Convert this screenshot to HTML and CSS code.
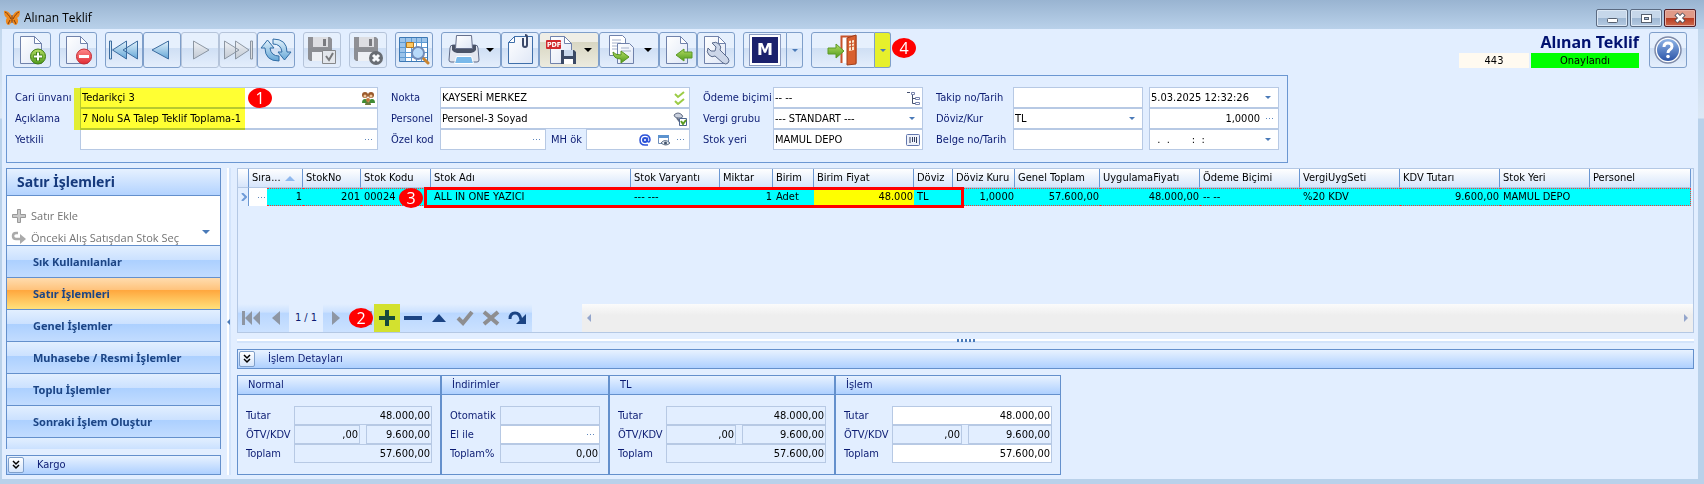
FILE: index.html
```
<!DOCTYPE html>
<html lang="tr">

	<head>
		<meta charset="utf-8" />
		<title>Alınan Teklif</title>
		<link rel="stylesheet" href="styles.css">
	</head>

	<body>
		<!-- gradients and shapes shared by the icons -->
		<svg class="defs" width="0" height="0" aria-hidden="true">
			<defs>
				<linearGradient id="gBlue" x1="0" y1="0" x2="0" y2="1"><stop offset="0" stop-color="#e4f3fc" /><stop offset="1" stop-color="#62a5d6" /></linearGradient>
				<linearGradient id="gPage" x1="0" y1="0" x2="1" y2="1"><stop offset="0" stop-color="#fff" /><stop offset="1" stop-color="#dfe7f6" /></linearGradient>
				<linearGradient id="gGreen" x1="0" y1="0" x2="0" y2="1"><stop offset="0" stop-color="#b4dc62" /><stop offset="1" stop-color="#4f9a1c" /></linearGradient>
				<linearGradient id="gRed" x1="0" y1="0" x2="0" y2="1"><stop offset="0" stop-color="#ff8a8a" /><stop offset="1" stop-color="#e02c34" /></linearGradient>
				<linearGradient id="gGray" x1="0" y1="0" x2="0" y2="1"><stop offset="0" stop-color="#f1f3f6" /><stop offset="1" stop-color="#bfc5cd" /></linearGradient>
				<linearGradient id="gHelp" x1="0" y1="0" x2="0" y2="1"><stop offset="0" stop-color="#8fb4e6" /><stop offset="1" stop-color="#2c55a8" /></linearGradient>
				<symbol id="page" viewBox="0 0 32 32"><path d="M4.500 2.500h14l7 7v20h-21z" fill="url(#gPage)" stroke="#7082ab" /><path d="M18.500 2.500v7h7z" fill="#fff" stroke="#7082ab" /></symbol>
				<symbol id="disk" viewBox="0 0 32 32"><path d="M2 3h22l2 2v22H4l-2-2z" fill="#808083" /><path d="M7 3h15v10H7z" fill="#dcdcde" /><path d="M17 5h3v7h-3z" fill="#66666a" /><path d="M6 18h17v9H6z" fill="#f2f2f4" /></symbol>
			</defs>
		</svg>

		<div class="window">
			<div class="title-bar">
				<svg class="logo" width="16" height="16" viewBox="0 0 16 16"><path d="M8 7C6 2 2 0 0 1c0 4 1 6 3 7-2 2-1 6 1 7 2 0 3-2 4-4 1 2 2 4 4 4 2-1 3-5 1-7 2-1 3-3 3-7-2-1-6 1-8 6z" fill="#f08a1d" /><path d="M7 9C5 5 3 3 1 2M9 9c2-4 4-6 6-7M6 10l-2 4M10 10l2 4M8 5v8" stroke="#7a3a10" fill="none" /></svg>
				<span class="title-text">Alınan Teklif</span>
				<div class="win-buttons">
					<button type="button" aria-label="Simge durumu"><svg width="14" height="12" viewBox="0 0 14 12"><rect x="2.500" y="6.500" width="10" height="4" rx="1" fill="#fff" stroke="#555f6e" /></svg></button>
					<button type="button" aria-label="Ekranı kapla"><svg width="14" height="12" viewBox="0 0 14 12"><rect x="2.500" y="2.500" width="10" height="8" fill="#fff" stroke="#555f6e" /><rect x="5.500" y="5.500" width="4" height="2" fill="#a9bdd6" stroke="#555f6e" /></svg></button>
					<button type="button" class="close" aria-label="Kapat"><svg width="14" height="12" viewBox="0 0 14 12"><path d="M3 2l8 8M11 2l-8 8" stroke="#4f4f59" stroke-width="4.500" /><path d="M3.500 2.500l7 7M10.500 2.500l-7 7" stroke="#fff" stroke-width="2.500" /></svg></button>
				</div>
			</div>

			<div class="client">
				<div class="toolbar">
					<div class="group">
						<button type="button" aria-label="Yeni"><svg viewBox="0 0 32 32"><use href="#page" /><circle cx="22" cy="22.500" r="7.500" fill="url(#gGreen)" stroke="#3f7d14" /><path d="M22 18v9M17.500 22.500h9" stroke="#3f7d14" stroke-width="4" /><path d="M22 18.500v8M18 22.500h8" stroke="#fff" stroke-width="2" /></svg></button>
					</div>
					<div class="group">
						<button type="button" aria-label="Sil"><svg viewBox="0 0 32 32"><use href="#page" /><circle cx="22" cy="22.500" r="7.500" fill="url(#gRed)" stroke="#c22a33" /><path d="M17 22.500h10" stroke="#fff" stroke-width="3" /></svg></button>
					</div>
					<div class="group">
						<button type="button" aria-label="İlk"><svg viewBox="0 0 32 32"><path d="M18.500 7v18L4.500 16zM29.500 7v18L15 16z" fill="url(#gBlue)" stroke="#3c6c9f" /><path d="M1.500 7h2v18h-2z" fill="#cfe5f5" stroke="#3c6c9f" /></svg></button>
						<button type="button" aria-label="Önceki"><svg viewBox="0 0 32 32"><path d="M22.500 7v18L6 16z" fill="url(#gBlue)" stroke="#3c6c9f" /></svg></button>
						<button type="button" disabled aria-label="Sonraki"><svg viewBox="0 0 32 32"><path d="M9.500 7v18L25 16z" fill="url(#gGray)" stroke="#7d8793" /></svg></button>
						<button type="button" disabled aria-label="Son"><svg viewBox="0 0 32 32"><path d="M2.500 7v18L17 16zM13.500 7v18L27 16z" fill="url(#gGray)" stroke="#7d8793" /><path d="M28.500 7h2v18h-2z" fill="#ddd" stroke="#7d8793" /></svg></button>
						<button type="button" aria-label="Yenile"><svg viewBox="0 0 32 32"><path d="M5 14q0 13 14 13v-5q-8 0-9-8h4L7.500 6 1 14zM27 18q0-13-14-13v5q8 0 9 8h-4l6.500 8 6.500-8z" fill="url(#gBlue)" stroke="#316da5" /></svg></button>
					</div>
					<div class="group">
						<button type="button" disabled aria-label="Kaydet"><svg viewBox="0 0 32 32"><use href="#disk" /><path d="M16.500 16.500h13v13h-13z" fill="#e5e7ea" stroke="#777" /><path d="M20 22l3 4 4-7" stroke="#666" stroke-width="2" fill="none" /></svg></button>
					</div>
					<div class="group">
						<button type="button" disabled aria-label="Vazgeç"><svg viewBox="0 0 32 32"><use href="#disk" /><circle cx="24" cy="24" r="7" fill="#55585c" /><path d="M21 21l6 6M27 21l-6 6" stroke="#fff" stroke-width="3" /></svg></button>
					</div>
					<div class="group">
						<button type="button" aria-label="Ara"><svg viewBox="0 0 32 32"><path d="M1.500 3.500h28v24h-28z" fill="#fff" stroke="#3c78b4" /><path d="M2 4h27v4H2zM2 4h5v23H2z" fill="#9cc4ea" /><path d="M2 8.500h27M2 13.500h27M2 18.500h27M2 23.500h27M7.500 4v23M13.500 4v23M18.500 4v23M23.500 4v23" stroke="#5e9ad2" /><path d="M8.500 8.500h7v5h-7z" fill="#ffc860" stroke="#b87a20" /><path d="M25 24l5 5" stroke="#c98430" stroke-width="3" stroke-linecap="round" /><circle cx="20" cy="19" r="6" fill="#b7dafa" stroke="#708bb8" stroke-width="2" /></svg></button>
					</div>
					<div class="group">
						<button type="button" class="drop" aria-label="Yazdır"><svg viewBox="0 0 32 32"><path d="M2 14q0-3 3-3h22q3 0 3 3l1 12q0 2-2 2H3q-2 0-2-2z" fill="#e3e7f0" stroke="#5f6b88" /><path d="M4 11h24v5q-2 3-5 3H9q-3 0-5-3z" fill="#4b5468" /><path d="M8.500 1.500h15l1 13h-17z" fill="url(#gPage)" stroke="#66708c" /><path d="M8.500 22.500h15l2 7h-19z" fill="#79b9ea" stroke="#fff" /></svg><i class="arrow"></i></button>
						<button type="button" aria-label="Ekler"><svg viewBox="0 0 32 32"><path d="M10.500 2.500h18v27h-24v-21z" fill="url(#gPage)" stroke="#3f6faa" /><path d="M4.500 8.500h6v-6z" fill="#fff" stroke="#3f6faa" /><path d="M19 4v7q0 2 2 2t2-2V3q0-2-2-2" fill="none" stroke="#3b4868" stroke-width="2" /></svg></button>
						<button type="button" class="drop warm" aria-label="PDF kaydet"><svg viewBox="0 0 32 32"><use href="#page" /><rect x="0" y="6" width="15" height="9" rx="1" fill="#d0282d" /><text x="1" y="13" class="pdf">PDF</text><path d="M15 16h13l2 2v12H15z" fill="#3b4a66" /><path d="M18 16h9v6h-9z" fill="#c9d9ee" /><path d="M18 25h9v5h-9z" fill="#fff" /></svg><i class="arrow"></i></button>
						<button type="button" class="drop" aria-label="Kopyala"><svg viewBox="0 0 32 32"><path d="M3.500 1.500h13l3 3v17h-16z" fill="#fff" stroke="#7082ab" /><path d="M6 6h9M6 9h9M6 12h9M6 15h5" stroke="#a5b1cb" /><path d="M11.500 9.500h12l4 4v16h-16z" fill="url(#gPage)" stroke="#7082ab" /><path d="M15 14h8M15 17h10" stroke="#a5b1cb" /><path d="M7 18q2 3 8 3v-4l8 6-8 6v-4q-8 0-8-7z" fill="url(#gGreen)" stroke="#56931f" /></svg><i class="arrow"></i></button>
						<button type="button" aria-label="Al"><svg viewBox="0 0 32 32"><use href="#page" /><path d="M14 21l8-6v3h8v6h-8v3z" fill="url(#gGreen)" stroke="#5c9a27" /></svg></button>
						<button type="button" aria-label="Araçlar"><svg viewBox="0 0 32 32"><use href="#page" /><path d="M8 14q-2 4 1 7t6 1l8 7q3 2 5 0t0-5l-8-8q2-3-1-6t-7-1l4 4-1 4-4 0z" fill="#ccd6e8" stroke="#5b6b8b" /></svg></button>
					</div>
					<div class="group">
						<button type="button" class="medium" aria-label="Modül"><span class="mlogo">M</span></button>
						<button type="button" class="thin" aria-label="Modül seçenekleri"><i class="arrow blue"></i></button>
					</div>
					<div class="group">
						<button type="button" class="wide" aria-label="Çıkış"><svg viewBox="0 0 32 32"><path d="M14.500 29V2.500h14V29" fill="#fff" stroke="#c8532a" stroke-width="2" /><path d="M20 4l9-3v29l-9 1z" fill="#d9602f" stroke="#9f3f1b" /><path d="M22 7l5-1v10l-5 1z" fill="#fbe7cc" /><path d="M24.500 6v10M22 10l5-1M22 13l5-1" stroke="#c8532a" /><path d="M1 14h8v-4l8 7-8 7v-4H1z" fill="url(#gGreen)" stroke="#5c9a27" /></svg></button>
						<button type="button" class="thin lit" aria-label="Çıkış seçenekleri"><i class="arrow blue"></i></button>
						<span class="badge badge-4">4</span>
					</div>
					<div class="status">
						<h1>Alınan Teklif</h1>
						<div class="state">
							<span class="doc-no">443</span>
							<span class="approved">Onaylandı</span>
						</div>
					</div>
					<button type="button" class="help" aria-label="Yardım"><svg viewBox="0 0 32 32"><circle cx="16" cy="16" r="13" fill="#fff" stroke="#7e8aa8" stroke-width="1.500" /><circle cx="16" cy="16" r="11" fill="url(#gHelp)" /><path d="M12 13q0-4 4-4t4 3.500q0 2-2.500 3.500-1.500 1-1.500 3" fill="none" stroke="#fff" stroke-width="3" /><circle cx="16" cy="22.500" r="1.800" fill="#fff" /></svg></button>
				</div>

				<form class="header-form">
					<label for="cari">Cari ünvanı</label>
					<div class="field"><input id="cari" value="Tedarikçi 3"><svg width="14" height="14" viewBox="0 0 14 14"><circle cx="4" cy="4" r="3" fill="#9a5a2c" /><circle cx="10" cy="4" r="3" fill="#9a5a2c" /><circle cx="4" cy="5" r="1.500" fill="#f2c79a" /><circle cx="10" cy="5" r="1.500" fill="#f2c79a" /><path d="M1 12q0-4 3-4t3 4zM8 12q0-4 3-4t3 4z" fill="#3f8b34" /><circle cx="7" cy="9" r="2" fill="#c0763c" /><path d="M4 14q0-3 3-3t3 3z" fill="#6f7a3c" /></svg></div>
					<label for="nokta" class="next">Nokta</label>
					<div class="field"><input id="nokta" value="KAYSERİ MERKEZ"><svg width="14" height="14" viewBox="0 0 14 14"><path d="M2 3l3 3 6-5M2 10l3 3 6-5" stroke="#9ccc46" stroke-width="2" fill="none" /></svg></div>
					<label for="odeme" class="next">Ödeme biçimi</label>
					<div class="field"><input id="odeme" value="-- --"><svg width="14" height="14" viewBox="0 0 14 14"><path d="M1 1.500h3M6.500 4v8.500h3M6.500 7.500h3" stroke="#44506e" fill="none" /><path d="M5.500 1.500h3v2h-3zM9.500 6.500h4v2h-4zM9.500 11.500h4v2h-4z" fill="#fff" stroke="#7a86ae" /></svg></div>
					<label for="takip" class="next">Takip no/Tarih</label>
					<div class="field"><input id="takip"></div>
					<div class="field date"><input aria-label="Takip tarihi" value="5.03.2025 12:32:26"><i class="arrow blue"></i></div>

					<label for="aciklama">Açıklama</label>
					<div class="field"><input id="aciklama" value="7 Nolu SA Talep Teklif Toplama-1"></div>
					<label for="personel" class="next">Personel</label>
					<div class="field"><input id="personel" value="Personel-3 Soyad"><svg width="14" height="14" viewBox="0 0 14 14"><path d="M1 3q4-4 8 0 2 2-1 3H4Q1 5 1 3z" fill="#c9d0dd" stroke="#636e85" /><path d="M4 6l3 4" stroke="#636e85" stroke-width="2" /><path d="M6.500 6.500h7v7h-7z" fill="#fff" stroke="#4d658f" /><path d="M8 9l2 3 3-4" stroke="#5a9b22" stroke-width="2" fill="none" /></svg></div>
					<label for="vergi" class="next">Vergi grubu</label>
					<div class="field"><select id="vergi"><option>--- STANDART ---</option></select><i class="arrow blue"></i></div>
					<label for="doviz" class="next">Döviz/Kur</label>
					<div class="field"><select id="doviz"><option>TL</option></select><i class="arrow blue"></i></div>
					<div class="field date num"><input aria-label="Kur" value="1,0000"><i class="dots"></i></div>

					<label for="yetkili">Yetkili</label>
					<div class="field"><input id="yetkili"><i class="dots"></i></div>
					<label for="ozel" class="next">Özel kod</label>
					<div class="split">
						<div class="field"><input id="ozel"><i class="dots"></i></div>
						<label for="mhok">MH ök</label>
						<div class="field"><input id="mhok"><svg width="12" height="14" viewBox="0 0 12 14"><circle cx="6" cy="7" r="2" fill="none" stroke="#2b52d8" stroke-width="2" /><path d="M8.500 4.500v4q2 1.500 2.500-1.500 0-5-5-5t-5 5 5 5h3" fill="none" stroke="#2b52d8" stroke-width="1.500" /></svg><svg width="14" height="14" viewBox="0 0 14 14"><path d="M1.500 2.500h10v8h-10z" fill="#fff" stroke="#6e8fbd" /><path d="M1 2h11v3H1z" fill="#5c93cf" /><path d="M4 10q4-5 9 0-4 4-9 0z" fill="#e4eaf2" stroke="#5b6d85" /><circle cx="8.500" cy="10" r="1.500" fill="#44546b" /></svg><i class="dots"></i></div>
					</div>
					<label for="stokyeri" class="next">Stok yeri</label>
					<div class="field"><input id="stokyeri" value="MAMUL DEPO"><svg width="14" height="14" viewBox="0 0 14 14"><rect x=".5" y="1.500" width="13" height="11" rx="1" fill="#eef2fb" stroke="#6277ad" /><path d="M4 4v6M6.500 4v5M8.500 4v5M10.500 4v6" stroke="#333d5c" /></svg></div>
					<label for="belge" class="next">Belge no/Tarih</label>
					<div class="field"><input id="belge"></div>
					<div class="field date"><input aria-label="Belge tarihi" value="  .  .       :  :"><i class="arrow blue"></i></div>

					<span class="marker"></span>
					<span class="badge badge-1">1</span>
				</form>

				<div class="main">
					<div class="sidebar">
						<div class="nav-box">
							<h2>Satır İşlemleri</h2>
							<div class="actions">
								<button type="button"><svg width="16" height="16" viewBox="0 0 16 16"><path d="M6.500 1.500h3v5h5v3h-5v5h-3v-5h-5v-3h5z" fill="#c9c9c9" stroke="#999" /></svg>Satır Ekle</button>
								<button type="button"><svg width="16" height="16" viewBox="0 0 16 16"><path d="M7 3H5Q2 3 2 6t3 3h6" fill="none" stroke="#aaa" stroke-width="2.500" /><path d="M9 4l6 5-6 5z" fill="#aaa" /></svg>Önceki Alış Satışdan Stok Seç</button>
								<i class="arrow blue"></i>
							</div>
							<a href="#">Sık Kullanılanlar</a>
							<a href="#" class="current">Satır İşlemleri</a>
							<a href="#">Genel İşlemler</a>
							<a href="#">Muhasebe / Resmi İşlemler</a>
							<a href="#">Toplu İşlemler</a>
							<a href="#">Sonraki İşlem Oluştur</a>
							<div class="rest"></div>
						</div>
						<div class="bar">
							<button type="button" aria-label="Aç"><svg width="8" height="10" viewBox="0 0 8 10"><path d="M1 1l3 3 3-3M1 5l3 3 3-3" fill="none" stroke="#000" stroke-width="1.500" /></svg></button>
							<span>Kargo</span>
						</div>
					</div>
					<div class="splitter-v"><i></i></div>

					<div class="content">
						<div class="grid">
							<div class="rows">
								<table>
									<colgroup>
										<col class="c11"><col class="c18"><col class="c36"><col class="c58"><col class="c70"><col class="c200"><col class="c89"><col class="c53"><col class="c41"><col class="c100"><col class="c39"><col class="c62"><col class="c85"><col class="c100"><col class="c100"><col class="c100"><col class="c100"><col class="c90"><col>
									</colgroup>
									<thead>
										<tr>
											<th></th>
											<th colspan="2">Sıra...<i class="sort"></i></th>
											<th>StokNo</th>
											<th>Stok Kodu</th>
											<th>Stok Adı</th>
											<th>Stok Varyantı</th>
											<th>Miktar</th>
											<th>Birim</th>
											<th>Birim Fiyat</th>
											<th>Döviz</th>
											<th>Döviz Kuru</th>
											<th>Genel Toplam</th>
											<th>UygulamaFiyatı</th>
											<th>Ödeme Biçimi</th>
											<th>VergiUygSeti</th>
											<th>KDV Tutarı</th>
											<th>Stok Yeri</th>
											<th>Personel</th>
										</tr>
									</thead>
									<tbody>
										<tr>
											<td class="handle"><svg width="6" height="8" viewBox="0 0 6 8"><path d="M1 0l4 4-4 4" fill="none" stroke="#6f9bd8" stroke-width="2" /></svg></td>
											<td class="tree"><i class="dots"></i></td>
											<td class="r">1</td>
											<td class="r">201</td>
											<td>00024</td>
											<td>ALL IN ONE YAZICI</td>
											<td>--- ---</td>
											<td class="r">1</td>
											<td>Adet</td>
											<td class="r price">48.000</td>
											<td>TL</td>
											<td class="r">1,0000</td>
											<td class="r">57.600,00</td>
											<td class="r">48.000,00</td>
											<td>-- --</td>
											<td>%20 KDV</td>
											<td class="r">9.600,00</td>
											<td>MAMUL DEPO</td>
											<td></td>
										</tr>
									</tbody>
								</table>
								<span class="frame"></span>
								<span class="badge badge-3">3</span>
							</div>
							<div class="footer">
								<div class="navigator">
									<button type="button" class="w32" aria-label="İlk kayıt"><svg width="20" height="16" viewBox="0 0 20 16"><path d="M1 1h3v14H1zM11 1v14L4 8zM19 1v14l-7-7z" fill="#8e96a3" /></svg></button>
									<button type="button" aria-label="Önceki kayıt"><svg width="10" height="16" viewBox="0 0 10 16"><path d="M9 1v14L1 8z" fill="#8e96a3" /></svg></button>
									<span class="pos">1 / 1</span>
									<button type="button" aria-label="Sonraki kayıt"><svg width="10" height="16" viewBox="0 0 10 16"><path d="M1 1v14l8-7z" fill="#8e96a3" /></svg></button>
									<button type="button" class="w32" aria-label="Son kayıt"><svg width="20" height="16" viewBox="0 0 20 16"><path d="M1 1v14l7-7zM9 1v14l7-7zM17 1h3v14h-3z" fill="#8e96a3" /></svg></button>
									<button type="button" class="lit" aria-label="Ekle"><svg width="18" height="18" viewBox="0 0 18 18"><path d="M7 1h4v6h6v4h-6v6H7v-6H1V7h6z" fill="#174a3c" /></svg></button>
									<button type="button" aria-label="Çıkar"><svg width="18" height="18" viewBox="0 0 18 18"><path d="M0 7h18v4H0z" fill="#1b4484" /></svg></button>
									<button type="button" aria-label="Düzenle"><svg width="18" height="18" viewBox="0 0 18 18"><path d="M2 13h14L9 5z" fill="#1b4484" /></svg></button>
									<button type="button" aria-label="Onayla"><svg width="18" height="18" viewBox="0 0 18 18"><path d="M2 9l5 5 9-11" fill="none" stroke="#8e8e90" stroke-width="4" /></svg></button>
									<button type="button" aria-label="İptal"><svg width="18" height="18" viewBox="0 0 18 18"><path d="M2 3l14 12M16 3L2 15" stroke="#8e8e90" stroke-width="4" /></svg></button>
									<button type="button" aria-label="Yinele"><svg width="18" height="18" viewBox="0 0 18 18"><path d="M2 10q0-6 5-6t6 7" fill="none" stroke="#1b4484" stroke-width="3" /><path d="M18 5v10H8z" fill="#1b4484" /></svg></button>
									<span class="badge badge-2">2</span>
								</div>
								<div class="scroll"><i class="left"></i><i class="right"></i></div>
							</div>
						</div>
						<div class="splitter-h"><i></i></div>
						<div class="bar">
							<button type="button" aria-label="Aç"><svg width="8" height="10" viewBox="0 0 8 10"><path d="M1 1l3 3 3-3M1 5l3 3 3-3" fill="none" stroke="#000" stroke-width="1.500" /></svg></button>
							<span>İşlem Detayları</span>
						</div>
						<div class="totals">
							<fieldset class="normal">
								<legend>Normal</legend>
								<label for="n1">Tutar</label><input id="n1" class="full" value="48.000,00" readonly>
								<label for="n2">ÖTV/KDV</label><input id="n2" value=",00" readonly><input aria-label="KDV" class="second" value="9.600,00" readonly>
								<label for="n3">Toplam</label><input id="n3" class="full" value="57.600,00" readonly>
							</fieldset>
							<fieldset class="discount">
								<legend>İndirimler</legend>
								<label for="d1">Otomatik</label><input id="d1" class="full" readonly>
								<label for="d2">El ile</label>
								<div class="field full"><input id="d2"><i class="dots"></i></div>
								<label for="d3">Toplam%</label><input id="d3" class="full" value="0,00" readonly>
							</fieldset>
							<fieldset>
								<legend>TL</legend>
								<label for="t1">Tutar</label><input id="t1" class="full" value="48.000,00" readonly>
								<label for="t2">ÖTV/KDV</label><input id="t2" value=",00" readonly><input aria-label="KDV" class="second" value="9.600,00" readonly>
								<label for="t3">Toplam</label><input id="t3" class="full" value="57.600,00" readonly>
							</fieldset>
							<fieldset>
								<legend>İşlem</legend>
								<label for="i1">Tutar</label><input id="i1" class="full" value="48.000,00">
								<label for="i2">ÖTV/KDV</label><input id="i2" value=",00" readonly><input aria-label="KDV" class="second" value="9.600,00" readonly>
								<label for="i3">Toplam</label><input id="i3" class="full" value="57.600,00">
							</fieldset>
						</div>
					</div>
				</div>
			</div>
		</div>
	</body>

</html>
```

FILE: styles.css
```
* {
	box-sizing: border-box;
	padding: 0;
	margin: 0;
}

body {
	font: 11px/14px "DejaVu Sans Condensed", "Noto Sans", sans-serif;
	color: #000;
	background: #b9d1ea;
}

button, input, select {
	font: inherit;
	color: inherit;
	border: 0;
	background: none;
}

i {
	display: block;
	flex: none;
}

svg {
	display: block;
	flex: none;
}

.defs {
	position: absolute;
}

.window {
	display: flex;
	flex-direction: column;
	min-height: 100vh;
	padding: 0 6px 5px 2px;
	background: linear-gradient(#b9d1ea, #dce8f5 118px, #b9d1ea 119px);
}

/* title bar */
.title-bar {
	display: flex;
	align-items: center;
	height: 29px;
	margin: 0 -6px 0 -2px;
	padding: 6px 8px 0 4px;
	background: linear-gradient(#99b4d1, #b9d1ea);
}

.title-text {
	flex: 1;
	margin-left: 4px;
	font: 12px/16px "Open Sans", sans-serif;
}

.win-buttons {
	display: flex;
	gap: 2px;
}

.win-buttons button {
	display: flex;
	align-items: center;
	justify-content: center;
	width: 32px;
	height: 18px;
	border: 1px solid #5b6b82;
	border-radius: 2px;
	box-shadow: inset 0 0 0 1px #dce8f5;
	background: linear-gradient(#c6d7ea 50%, #9db6d2 50%, #b5cae2);
}

.win-buttons .close {
	border-color: #50202a;
	box-shadow: inset 0 0 0 1px #e8b0a4;
	background: linear-gradient(#e09a88 50%, #b8391f 50%, #cc6a4c);
}

.client {
	flex: 1;
	display: flex;
	flex-direction: column;
	padding: 3px 4px 4px;
	background: #e2eeff;
}

/* toolbar */
.toolbar {
	display: flex;
	gap: 8px;
	height: 36px;
	padding: 0 7px;
}

.group {
	display: flex;
	position: relative;
}

.toolbar button {
	display: flex;
	align-items: center;
	justify-content: center;
	width: 38px;
	height: 36px;
	border: 1px solid #7f9fca;
	border-radius: 3px;
	background: linear-gradient(#e6f0fd 45%, #cfdff4 45%, #e4eefc);
}

.toolbar button svg {
	width: 32px;
	height: 32px;
}

.toolbar button:disabled {
	border-color: #b5c4da;
}

.toolbar button:disabled svg {
	opacity: .85;
}

.toolbar .drop {
	width: 60px;
	gap: 6px;
}

.toolbar .warm {
	background: linear-gradient(#efeee6 25%, #d8d6c2 25%, #ecebdf);
}

.toolbar .medium {
	width: 44px;
	border-radius: 3px 0 0 3px;
}

.toolbar .wide {
	width: 64px;
	border-radius: 3px 0 0 3px;
}

.toolbar .thin {
	width: 16px;
	border-left: 0;
	border-radius: 0 3px 3px 0;
}

.toolbar .lit {
	background: #e6f02c;
}

.pdf {
	font: bold 7px "DejaVu Sans Condensed", sans-serif;
	fill: #fff;
}

.mlogo {
	width: 30px;
	height: 30px;
	border: 2px solid #fff;
	outline: 1px solid #8a9bc0;
	background: #1b216c;
	color: #fff;
	font: bold 16px/26px "DejaVu Sans", sans-serif;
}

.arrow {
	border: 4px solid transparent;
	border-top-color: #000;
	border-bottom: 0;
}

.arrow.blue {
	border-top-color: #4a7ab8;
}

.toolbar .thin .arrow {
	border-width: 3px 3px 0;
}

.status {
	margin-left: auto;
	margin-right: 2px;
	text-align: right;
}

.status h1 {
	color: #00116f;
	font: bold 16px/21px "Noto Sans", sans-serif;
}

.state {
	display: flex;
	gap: 2px;
	line-height: 15px;
	text-align: center;
}

.doc-no {
	width: 70px;
	background: #fffaf0;
}

.approved {
	width: 108px;
	background: #0f0;
}

/* numbered marks */
.badge {
	position: absolute;
	width: 24px;
	height: 20px;
	border-radius: 50%;
	background: #f00;
	color: #fff;
	font: 16px/20px "Open Sans", sans-serif;
	text-align: center;
}

.badge-1 {
	left: 241px;
	top: 12px;
}

.badge-2 {
	left: 111px;
	top: 4px;
}

.badge-3 {
	left: 161px;
	top: 19px;
}

.badge-4 {
	left: 81px;
	top: 6px;
}

.marker {
	position: absolute;
	left: 67px;
	top: 12px;
	width: 171px;
	height: 42px;
	background: #ff3;
	mix-blend-mode: multiply;
}

/* header form */
.header-form {
	position: relative;
	display: grid;
	grid-template-columns: 65px 298px 62px 250px 83px 150px 90px 130px 136px;
	grid-auto-rows: 21px;
	align-items: center;
	width: max-content;
	height: 88px;
	margin-top: 7px;
	padding: 11px 8px;
	border: 1px solid #6b97d2;
	color: #0c1c73;
}

.header-form label {
	white-space: nowrap;
}

.header-form .next {
	padding-left: 13px;
}

.header-form .date {
	margin-left: 6px;
}

.field {
	display: flex;
	align-items: center;
	gap: 6px;
	height: 21px;
	padding-right: 2px;
	border: 1px solid #b7c9e4;
	background: #fff;
	color: #000;
}

.field input, .field select {
	flex: 1;
	min-width: 0;
	width: 0;
	padding-left: 1px;
	height: 100%;
	appearance: none;
	white-space: pre;
}

.field .arrow {
	border-width: 3px 3px 0;
	margin-right: 5px;
}

.num input {
	text-align: right;
}

/* three-dot lookup button */
.dots {
	width: 8px;
	height: 1px;
	margin-right: 2px;
	background: repeating-linear-gradient(90deg, #5d86bd 0 1px, transparent 1px 3px);
}

.split {
	display: grid;
	grid-template-columns: 106px 40px 104px;
	align-items: center;
}

.split label {
	padding-left: 5px;
}

/* lower part */
.main {
	flex: 1;
	display: flex;
	margin-top: 5px;
}

.sidebar {
	display: flex;
	flex-direction: column;
	gap: 6px;
	width: 215px;
}

.nav-box {
	flex: 1;
	display: flex;
	flex-direction: column;
	border: 1px solid #6490cc;
	border-bottom: 0;
}

.nav-box h2 {
	height: 27px;
	padding-left: 10px;
	border-bottom: 1px solid #6490cc;
	background: linear-gradient(#e6f1ff, #b3d3ff);
	color: #163a7d;
	font: bold 14px/25px "Noto Sans", sans-serif;
}

.actions {
	position: relative;
	height: 49px;
	padding: 9px 4px 0;
	background: #fff;
}

.actions button {
	display: flex;
	align-items: center;
	gap: 4px;
	height: 22px;
	color: #737373;
	font: 11px/16px "Open Sans", sans-serif;
	white-space: nowrap;
}

.actions .arrow {
	position: absolute;
	right: 10px;
	top: 34px;
}

.nav-box a {
	height: 32px;
	padding-left: 26px;
	border-top: 1px solid #6490cc;
	background: linear-gradient(#e2efff, #cbe1ff 45%, #acd0ff 46%, #c2dcff);
	color: #1c4585;
	font: bold 11px/31px "Noto Sans", sans-serif;
	text-decoration: none;
}

.nav-box a.current {
	background: linear-gradient(#ffdcae, #ffc37c 38%, #ffa63d 39%, #ffe17c);
}

.rest {
	flex: 1;
	border-top: 1px solid #6490cc;
	background: linear-gradient(#e2efff, #cbe1ff);
}

.bar {
	display: flex;
	align-items: center;
	gap: 13px;
	height: 20px;
	padding-left: 1px;
	border: 1px solid #6490cc;
	background: linear-gradient(#e8f2ff, #aed0ff);
	color: #0c1c73;
}

.bar button {
	display: flex;
	align-items: center;
	justify-content: center;
	width: 16px;
	height: 16px;
	border: 1px solid #7f9fca;
	border-radius: 2px;
	background: linear-gradient(#fff, #d5e5fb);
}

.splitter-v {
	display: flex;
	align-items: center;
	width: 4px;
	margin: 0 6px;
	background: linear-gradient(90deg, #fff 2px, #d3e4fb 2px);
}

.splitter-v i {
	border: 3px solid transparent;
	border-right-color: #4a7ab8;
	border-left: 0;
}

.content {
	flex: 1;
	display: flex;
	flex-direction: column;
	min-width: 0;
}

.grid {
	flex: 1;
	display: flex;
	flex-direction: column;
	border: 1px solid #b4c8e4;
}

.rows {
	flex: 1;
	position: relative;
}

table {
	width: 100%;
	padding-right: 2px;
	border-collapse: separate;
	border-spacing: 0;
	table-layout: fixed;
}

.c11 { width: 11px; }
.c18 { width: 18px; }
.c36 { width: 36px; }
.c39 { width: 39px; }
.c41 { width: 41px; }
.c53 { width: 53px; }
.c58 { width: 58px; }
.c62 { width: 62px; }
.c70 { width: 70px; }
.c85 { width: 85px; }
.c89 { width: 89px; }
.c90 { width: 90px; }
.c100 { width: 100px; }
.c200 { width: 200px; }

th {
	position: relative;
	height: 19px;
	padding-left: 3px;
	border-right: 1px solid #6b97d2;
	border-bottom: 1px solid #b4c8e4;
	background: linear-gradient(#fff, #d6e5fb);
	font-weight: normal;
	text-align: left;
	white-space: nowrap;
}

td {
	height: 18px;
	padding: 0 1px 0 3px;
	border-top: 1px dotted #f33;
	border-bottom: 1px dotted #f33;
	background: #0ff;
	line-height: 16px;
	white-space: nowrap;
}

td:last-child {
	border-right: 1px dotted #f33;
}

.r {
	text-align: right;
}

.price {
	background: #ff0;
	border-color: #22c;
}

.handle {
	border: 0;
	border-right: 1px solid #6b97d2;
	background: #e2eeff;
}

.tree {
	padding-left: 9px;
	border: 0;
	background: #fff;
}

.sort {
	position: absolute;
	right: 7px;
	top: 7px;
	border: 5px solid transparent;
	border-bottom-color: #8fb8ee;
	border-top: 0;
}

.frame {
	position: absolute;
	left: 186px;
	top: 18px;
	width: 540px;
	height: 21px;
	border: 3px solid #f00;
}

/* record navigator */
.footer {
	display: flex;
	gap: 50px;
	height: 28px;
}

.navigator {
	position: relative;
	display: flex;
	padding-right: 2px;
	background: linear-gradient(#e2eeff, #cbe1ff 30%, #b9d7ff 31%, #cbe1ff);
}

.navigator button {
	display: flex;
	align-items: center;
	justify-content: center;
	width: 26px;
}

.navigator .w32 {
	width: 25px;
}

.navigator .lit {
	background: #d3e12f;
}

.pos {
	width: 34px;
	background: #e2eeff;
	color: #0c1c73;
	line-height: 28px;
	text-align: center;
}

.scroll {
	flex: 1;
	display: flex;
	align-items: center;
	justify-content: space-between;
	padding: 0 5px;
	background: linear-gradient(#fbfbfb, #eee 40%);
}

.scroll i {
	border: 4px solid transparent;
}

.scroll .left {
	border-right-color: #93a5cc;
	border-left: 0;
}

.scroll .right {
	border-left-color: #93a5cc;
	border-right: 0;
}

.splitter-h {
	display: flex;
	justify-content: center;
	height: 4px;
	margin: 6px 0;
	background: linear-gradient(#fff 2px, #d3e4fb 2px);
}

.splitter-h i {
	width: 18px;
	height: 3px;
	background: repeating-linear-gradient(90deg, #4a7ab8 0 2px, transparent 2px 4px);
}

/* totals */
.totals {
	display: flex;
	width: max-content;
	margin-top: 6px;
	color: #0c1c73;
}

fieldset {
	display: grid;
	grid-template-columns: 48px 70px 90px;
	grid-template-rows: 30px 19px 19px 19px;
	align-items: center;
	padding: 0 8px 11px;
	border: 1px solid #6490cc;
}

.normal {
	grid-template-columns: 48px 66px 72px;
}

.discount {
	grid-template-columns: 50px 50px 50px;
}

legend {
	float: left;
	grid-column: 1 / -1;
	align-self: start;
	width: calc(100% + 16px);
	height: 19px;
	margin: 0 -8px;
	padding-left: 10px;
	border-bottom: 1px solid #6490cc;
	background: linear-gradient(#e8f2ff, #aed0ff);
	line-height: 18px;
}

fieldset > input {
	width: 100%;
	min-width: 0;
	height: 19px;
	padding-right: 1px;
	border: 1px solid #b7c9e4;
	background: #fff;
	color: #000;
	text-align: right;
}

fieldset > input:read-only {
	background: #e2eeff;
}

fieldset .full {
	grid-column: 2 / 4;
}

fieldset .field {
	height: 19px;
}

fieldset .second {
	margin-left: 6px;
	width: calc(100% - 6px);
}
```
